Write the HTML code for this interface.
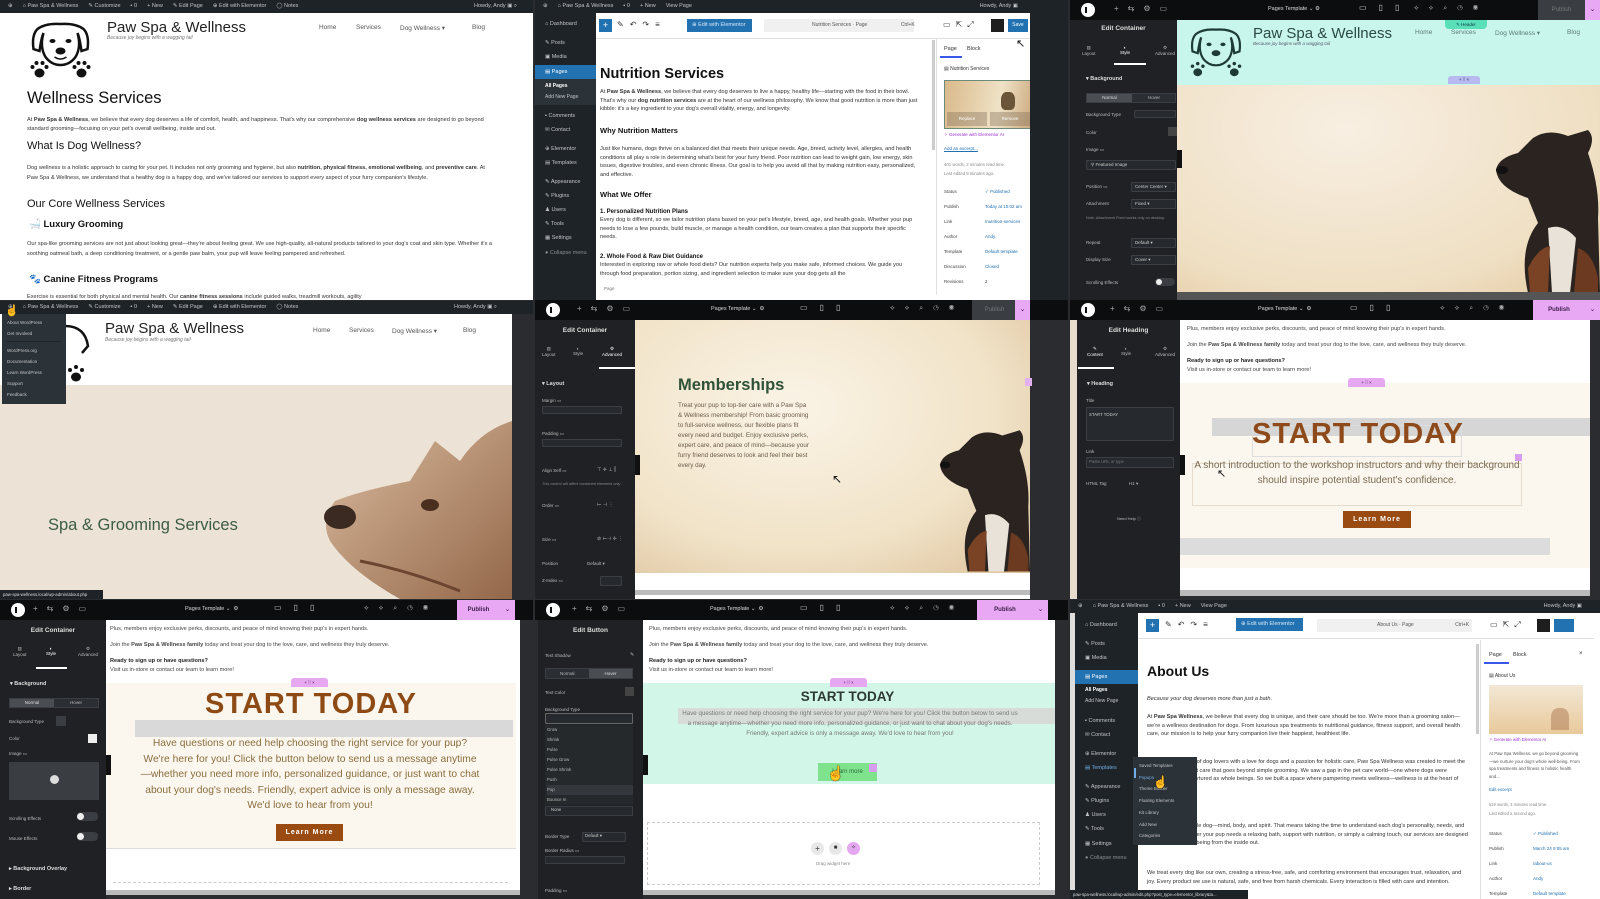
<!DOCTYPE html>
<html><head><meta charset="utf-8"><style>
*{box-sizing:border-box;margin:0;padding:0}
body{width:1600px;height:899px;overflow:hidden;background:#2a2c2f;font-family:"Liberation Sans",sans-serif;color:#333;position:relative}
.c{position:absolute;overflow:hidden;background:#fff}
.a{position:absolute;white-space:nowrap}
.adm{position:absolute;left:0;top:0;right:0;height:13px;background:#1d2327;color:#c3c4c7;font-size:5.5px;line-height:13px;padding-left:8px;white-space:nowrap}
.adm span{margin-right:10px}
.eb{position:absolute;left:0;top:0;right:0;height:20px;background:#0c0d0e}
.elogo{position:absolute;left:11px;top:3px;width:14px;height:14px;border-radius:50%;background:#fff}
.elogo:after{content:"";position:absolute;left:4px;top:4px;width:6px;height:6px;border-left:2px solid #0c0d0e}
.pub{position:absolute;top:0;height:20px;background:#3a3d42;color:#777;font-size:6px;line-height:20px;text-align:center}
.pubp{background:#e8a8f3;color:#3a1d48;font-weight:bold}
.chev{position:absolute;top:0;right:0;width:15px;height:20px;background:#e8a8f3;color:#4a2055;font-size:7px;line-height:20px;text-align:center}
.ep{position:absolute;left:0;top:20px;bottom:0;background:#1f2124;color:#ccc;font-size:5px}
.ep .a{color:#bbb}
.ph{position:absolute;left:0;right:0;top:6px;text-align:center;font-size:6.5px;font-weight:bold;color:#ddd}
.fld{position:absolute;height:8px;border:1px solid #3b3e43;border-radius:1px;background:#26292d}
.side{position:absolute;left:0;top:13px;bottom:0;background:#1d2327;color:#c3c4c7;font-size:5.5px}
.side div{position:absolute;left:10px;white-space:nowrap}
.bl{color:#333;font-size:5.6px;line-height:8.6px;position:absolute;white-space:normal}
.tl{font-size:5.6px;color:#555;position:absolute;white-space:nowrap}
</style></head><body>

<!-- ========== CELL A ========== -->
<div class="c" style="left:0;top:0;width:533px;height:300px">
 <div class="adm"><span>⊕</span><span>⌂ Paw Spa &amp; Wellness</span><span>✎ Customize</span><span>▪ 0</span><span>+ New</span><span>✎ Edit Page</span><span>⊕ Edit with Elementor</span><span>◯ Notes</span><span style="position:absolute;right:6px">Howdy, Andy ▣ ⌕</span></div>
 <svg class="a" style="left:27px;top:21px" width="67" height="62" viewBox="0 0 66 62"><path d="M10 8 Q18 2 33 3 Q48 2 56 8 Q62 14 60 28 L54 30 Q52 16 50 12 Q54 26 48 36 Q42 44 33 44 Q24 44 18 36 Q12 26 16 12 Q14 16 12 30 L6 28 Q4 14 10 8Z" fill="none" stroke="#111" stroke-width="2.5"/><ellipse cx="25" cy="20" rx="3" ry="2" fill="#111"/><ellipse cx="41" cy="20" rx="3" ry="2" fill="#111"/><ellipse cx="33" cy="30" rx="5" ry="3.5" fill="#111"/><path d="M27 36 Q33 40 39 36" stroke="#111" fill="none" stroke-width="1.5"/><g fill="#111"><ellipse cx="12" cy="52" rx="5" ry="4.5"/><circle cx="5" cy="46" r="2"/><circle cx="9" cy="42" r="2"/><circle cx="15" cy="42" r="2"/><circle cx="19" cy="46" r="2"/><ellipse cx="54" cy="52" rx="5" ry="4.5"/><circle cx="47" cy="46" r="2"/><circle cx="51" cy="42" r="2"/><circle cx="57" cy="42" r="2"/><circle cx="61" cy="46" r="2"/></g></svg>
 <div class="a" style="left:107px;top:19px;font-size:15px;color:#222">Paw Spa &amp; Wellness</div>
 <div class="a" style="left:107px;top:35px;font-size:5px;font-style:italic;color:#777">Because joy begins with a wagging tail</div>
 <div class="tl" style="left:319px;top:24px;font-size:6.5px">Home</div><div class="tl" style="left:356px;top:24px;font-size:6.5px">Services</div><div class="tl" style="left:400px;top:24px;font-size:6.5px">Dog Wellness ▾</div><div class="tl" style="left:472px;top:24px;font-size:6.5px">Blog</div>
 <div class="a" style="left:27px;top:89px;font-size:16.5px;color:#111">Wellness Services</div>
 <div class="bl" style="left:27px;top:116px;width:480px">At <b>Paw Spa &amp; Wellness</b>, we believe that every dog deserves a life of comfort, health, and happiness. That's why our comprehensive <b>dog wellness services</b> are designed to go beyond standard grooming—focusing on your pet's overall wellbeing, inside and out.</div>
 <div class="a" style="left:27px;top:140px;font-size:11px;color:#111">What Is Dog Wellness?</div>
 <div class="bl" style="left:27px;top:163px;width:470px;line-height:10px">Dog wellness is a holistic approach to caring for your pet. It includes not only grooming and hygiene, but also <b>nutrition, physical fitness, emotional wellbeing</b>, and <b>preventive care</b>. At Paw Spa &amp; Wellness, we understand that a healthy dog is a happy dog, and we've tailored our services to support every aspect of your furry companion's lifestyle.</div>
 <div class="a" style="left:27px;top:198px;font-size:11px;color:#111">Our Core Wellness Services</div>
 <div class="a" style="left:29px;top:219px;font-size:9.5px;font-weight:bold;color:#111">🛁 Luxury Grooming</div>
 <div class="bl" style="left:27px;top:239px;width:470px;line-height:10px">Our spa-like grooming services are not just about looking great—they're about feeling great. We use high-quality, all-natural products tailored to your dog's coat and skin type. Whether it's a soothing oatmeal bath, a deep conditioning treatment, or a gentle paw balm, your pup will leave feeling pampered and refreshed.</div>
 <div class="a" style="left:29px;top:274px;font-size:9.5px;font-weight:bold;color:#111">🐾 Canine Fitness Programs</div>
 <div class="bl" style="left:27px;top:293px;width:470px">Exercise is essential for both physical and mental health. Our <b>canine fitness sessions</b> include guided walks, treadmill workouts, agility</div>
</div>

<!-- ========== CELL B ========== -->
<div class="c" style="left:535px;top:0;width:533px;height:300px">
 <div class="adm"><span>⊕</span><span>⌂ Paw Spa &amp; Wellness</span><span>▪ 0</span><span>+ New</span><span>View Page</span><span style="position:absolute;right:40px">Howdy, Andy ▣</span></div>
 <div class="side" style="width:61px">
  <div style="top:8px">⌂ Dashboard</div><div style="top:27px">✎ Posts</div><div style="top:41px">▣ Media</div>
  <div style="left:0;top:52px;width:61px;height:14px;background:#2271b1;color:#fff;padding-left:10px;line-height:14px">▤ Pages</div>
  <div style="left:0;top:66px;width:61px;height:26px;background:#2c3338"></div>
  <div style="top:70px;color:#fff;font-weight:bold;font-size:5px">All Pages</div><div style="top:81px;font-size:5px">Add New Page</div>
  <div style="top:100px">▪ Comments</div><div style="top:114px">✉ Contact</div><div style="top:133px">⊕ Elementor</div><div style="top:147px">▤ Templates</div><div style="top:166px">✎ Appearance</div><div style="top:180px">✎ Plugins</div><div style="top:194px">♟ Users</div><div style="top:208px">✎ Tools</div><div style="top:222px">▦ Settings</div><div style="top:237px;color:#8c8f94">● Collapse menu</div>
 </div>
 <div class="a" style="left:61px;top:13px;width:436px;height:26px;border-bottom:1px solid #e0e0e0;background:#fff"></div>
 <div class="a" style="left:64px;top:19px;width:13px;height:13px;background:#2271b1;color:#fff;font-size:9px;text-align:center;line-height:13px">+</div>
 <div class="a" style="left:82px;top:20px;font-size:8px;color:#333;letter-spacing:6px">✎↶↷≡</div>
 <div class="a" style="left:152px;top:19px;width:65px;height:13px;background:#2271b1;color:#dbe9f5;font-size:5.5px;line-height:13px;padding-left:5px">⊕ Edit with Elementor</div>
 <div class="a" style="left:229px;top:19px;width:150px;height:13px;background:#f0f0f0;font-size:5px;line-height:13px;color:#555;padding-left:48px">Nutrition Services · Page <span style="margin-left:32px">Ctrl+K</span></div>
 <div class="a" style="left:408px;top:20px;font-size:8px;color:#333;letter-spacing:5px">▭⇱⤢</div>
 <div class="a" style="left:456px;top:19px;width:13px;height:13px;background:#1e1e1e"></div>
 <div class="a" style="left:473px;top:19px;width:20px;height:13px;background:#2271b1;color:#fff;font-size:5px;line-height:13px;text-align:center">Save</div>
 <div class="a" style="left:61px;top:39px;width:336px;height:256px;background:#fff;white-space:normal">
  <div class="a" style="left:4px;top:27px;font-size:14.5px;font-weight:bold;color:#111">Nutrition Services</div>
  <div class="bl" style="left:4px;top:49px;width:322px">At <b>Paw Spa &amp; Wellness</b>, we believe that every dog deserves to live a happy, healthy life—starting with the food in their bowl. That's why our <b>dog nutrition services</b> are at the heart of our wellness philosophy. We know that good nutrition is more than just kibble: it's a key ingredient to your dog's overall vitality, energy, and longevity.</div>
  <div class="a" style="left:4px;top:87px;font-size:7.5px;font-weight:bold;color:#111">Why Nutrition Matters</div>
  <div class="bl" style="left:4px;top:106px;width:322px">Just like humans, dogs thrive on a balanced diet that meets their unique needs. Age, breed, activity level, allergies, and health conditions all play a role in determining what's best for your furry friend. Poor nutrition can lead to weight gain, low energy, skin issues, digestive troubles, and even chronic illness. Our goal is to help you avoid all that by making nutrition easy, personalized, and effective.</div>
  <div class="a" style="left:4px;top:151px;font-size:7.5px;font-weight:bold;color:#111">What We Offer</div>
  <div class="a" style="left:4px;top:170px;font-size:6px;font-weight:bold;color:#111">1. Personalized Nutrition Plans</div>
  <div class="bl" style="left:4px;top:177px;width:322px">Every dog is different, so we tailor nutrition plans based on your pet's lifestyle, breed, age, and health goals. Whether your pup needs to lose a few pounds, build muscle, or manage a health condition, our team creates a plan that supports their specific needs.</div>
  <div class="a" style="left:4px;top:215px;font-size:6px;font-weight:bold;color:#111">2. Whole Food &amp; Raw Diet Guidance</div>
  <div class="bl" style="left:4px;top:222px;width:322px">Interested in exploring raw or whole food diets? Our nutrition experts help you make safe, informed choices. We guide you through food preparation, portion sizing, and ingredient selection to make sure your dog gets all the</div>
  <div class="a" style="left:8px;top:247px;font-size:4.5px;color:#777">Page</div>
 </div>
 <div class="a" style="left:397px;top:40px;width:3px;height:110px;background:#ccc"></div>
 <div class="a" style="left:401px;top:39px;width:96px;height:256px;background:#fff;border-left:1px solid #e0e0e0">
  <div class="a" style="left:7px;top:7px;font-size:5.5px;color:#333">Page</div><div class="a" style="left:30px;top:7px;font-size:5.5px;color:#333">Block</div>
  <div class="a" style="left:3px;top:17px;width:22px;height:1.5px;background:#3858e9"></div>
  <div class="a" style="left:7px;top:27px;font-size:5px;color:#333">▤ Nutrition Services</div>
  <div class="a" style="left:7px;top:41px;width:91px;height:49px;background:linear-gradient(100deg,#d9b98a,#efe2c6 60%,#c9a57a);border:1px solid #6a8a7a"></div>
  <div class="a" style="left:64px;top:53px;width:14px;height:18px;background:#6b5538;border-radius:40% 40% 30% 30%"></div>
  <div class="a" style="left:10px;top:73px;width:40px;height:14px;background:rgba(120,100,80,.35);color:#fff;font-size:4.5px;text-align:center;line-height:14px">Replace</div>
  <div class="a" style="left:53px;top:73px;width:40px;height:14px;background:rgba(120,100,80,.35);color:#fff;font-size:4.5px;text-align:center;line-height:14px">Remove</div>
  <div class="a" style="left:7px;top:93px;font-size:4.5px;color:#9b30d0">✧ Generate with Elementor AI</div>
  <div class="a" style="left:7px;top:107px;font-size:4.5px;color:#2271b1;text-decoration:underline">Add an excerpt...</div>
  <div class="a" style="left:7px;top:121px;font-size:4.3px;color:#888;line-height:9px">401 words, 2 minutes read time.<br>Last edited 9 minutes ago.</div>
  <div class="a" style="left:7px;top:145px;font-size:4.5px;color:#444;line-height:15px">Status<br>Publish<br>Link<br>Author<br>Template<br>Discussion<br>Revisions</div>
  <div class="a" style="left:48px;top:145px;font-size:4.5px;color:#2271b1;line-height:15px">✓ Published<br>Today at 10:02 am<br>/nutrition-services<br>Andy<br>Default template<br>Closed<br><span style="color:#444">2</span></div>
 </div>
 <div class="a" style="left:495px;top:13px;width:38px;height:287px;background:#1d2327"></div>
 <div class="a" style="left:481px;top:37px;font-size:11px;color:#111">↖</div>
</div>

<!-- ========== CELL C ========== -->
<div class="c" style="left:1070px;top:0;width:530px;height:300px;background:#f2e5cf">
 <div class="a" style="left:107px;top:20px;width:423px;height:272px;background:radial-gradient(ellipse at 40% 40%,#f8efe2,#efdfc3 70%,#e4c9a0)"></div>
 <div class="a" style="left:107px;top:20px;width:423px;height:65px;background:#c9f6ec"></div>
 <svg class="a" style="left:117px;top:27px" width="58" height="54" viewBox="0 0 66 62"><path d="M10 8 Q18 2 33 3 Q48 2 56 8 Q62 14 60 28 L54 30 Q52 16 50 12 Q54 26 48 36 Q42 44 33 44 Q24 44 18 36 Q12 26 16 12 Q14 16 12 30 L6 28 Q4 14 10 8Z" fill="none" stroke="#1d3b34" stroke-width="2.5"/><ellipse cx="33" cy="30" rx="5" ry="3.5" fill="#1d3b34"/><ellipse cx="25" cy="20" rx="3" ry="2" fill="#1d3b34"/><ellipse cx="41" cy="20" rx="3" ry="2" fill="#1d3b34"/><g fill="#1d3b34"><ellipse cx="12" cy="52" rx="5" ry="4.5"/><circle cx="6" cy="45" r="2"/><circle cx="12" cy="42" r="2"/><circle cx="18" cy="45" r="2"/><ellipse cx="54" cy="52" rx="5" ry="4.5"/><circle cx="48" cy="45" r="2"/><circle cx="54" cy="42" r="2"/><circle cx="60" cy="45" r="2"/></g></svg>
 <div class="a" style="left:183px;top:25px;font-size:15px;color:#2a4a44">Paw Spa &amp; Wellness</div>
 <div class="a" style="left:183px;top:41px;font-size:4.5px;color:#556;font-style:italic">Because joy begins with a wagging tail</div>
 <div class="tl" style="left:345px;top:29px;font-size:6.5px;color:#5a7a74">Home</div><div class="tl" style="left:381px;top:29px;font-size:6.5px;color:#5a7a74">Services</div><div class="tl" style="left:425px;top:29px;font-size:6.5px;color:#5a7a74">Dog Wellness ▾</div><div class="tl" style="left:497px;top:29px;font-size:6.5px;color:#5a7a74">Blog</div>
 <div class="a" style="left:375px;top:20px;width:42px;height:9px;background:#5ae0b8;border-radius:0 0 4px 4px;font-size:4.5px;color:#134;text-align:center;line-height:9px">✎ Header</div>
 <div class="a" style="left:378px;top:76px;width:32px;height:8px;background:#b8b9f0;border-radius:3px 3px 0 0;font-size:4.5px;text-align:center;line-height:8px;color:#335">+ ⁞⁞ ×</div>
 <svg class="a" style="left:418px;top:128px" width="112" height="165" viewBox="0 0 112 165"><path d="M40 165 Q30 120 50 95 L40 70 Q10 60 8 42 Q10 30 30 25 L45 10 Q60 0 80 8 L100 2 Q108 10 100 25 Q112 60 110 90 L112 165Z" fill="#2a2320"/><path d="M60 100 Q75 95 88 110 L82 165 L64 165Z" fill="#e8e2d8"/><path d="M40 140 Q50 120 62 118 L60 165 L42 165Z" fill="#7a4326"/><path d="M90 120 Q105 125 110 150 L110 165 L86 165Z" fill="#6b3a20"/><ellipse cx="14" cy="42" rx="6" ry="4" fill="#111"/></svg>
 <div class="eb"><div class="elogo"></div><div class="a" style="left:44px;top:4px;color:#aaa;font-size:8px;letter-spacing:9px">+⇆⚙▭</div><div class="a" style="left:198px;top:6px;color:#ddd;font-size:5.5px">Pages Template ⌄ ⚙</div><div class="a" style="left:289px;top:3px;color:#ccc;font-size:8px;letter-spacing:12px">▭▯▯</div><div class="a" style="left:344px;top:5px;color:#aaa;font-size:7px;letter-spacing:10px">⟡⟡⌕◷◉</div><div class="pub" style="left:468px;width:47px">Publish</div><div class="chev">⌄</div></div>
 <div class="ep" style="width:107px">
  <div class="ph" style="top:5px">Edit Container</div>
  <div class="a" style="left:12px;top:25px;font-size:4.5px;text-align:center">▥<br>Layout</div><div class="a" style="left:50px;top:25px;font-size:4.5px;text-align:center;color:#fff">◐<br>Style</div><div class="a" style="left:85px;top:25px;font-size:4.5px;text-align:center">⚙<br>Advanced</div>
  <div class="a" style="left:44px;top:43px;width:32px;height:1.5px;background:#fff"></div>
  <div class="a" style="left:16px;top:56px;font-size:5.5px;font-weight:bold;color:#ddd">▾ Background</div>
  <div class="a" style="left:16px;top:73px;width:90px;height:10px;background:#2b2e33;border:1px solid #3a3d42"></div><div class="a" style="left:17px;top:74px;width:45px;height:8px;background:#4a4d52;font-size:4.5px;text-align:center;line-height:8px;color:#ddd">Normal</div><div class="a" style="left:78px;top:75px;font-size:4.5px">Hover</div>
  <div class="a" style="left:16px;top:92px;font-size:4.5px">Background Type</div><div class="fld" style="left:64px;top:90px;width:42px"></div>
  <div class="a" style="left:16px;top:110px;font-size:4.5px">Color</div><div class="a" style="left:98px;top:107px;width:9px;height:9px;background:#444"></div>
  <div class="a" style="left:16px;top:127px;font-size:4.5px">Image ▭</div>
  <div class="fld" style="left:16px;top:140px;width:90px;height:10px;font-size:4.5px;line-height:8px;padding-left:4px;color:#ccc">⚲ Featured Image</div>
  <div class="a" style="left:16px;top:164px;font-size:4.5px">Position ▭</div><div class="fld" style="left:61px;top:162px;width:45px;height:10px;font-size:4.5px;line-height:8px;padding-left:3px">Center Center ▾</div>
  <div class="a" style="left:16px;top:181px;font-size:4.5px">Attachment</div><div class="fld" style="left:61px;top:179px;width:45px;height:10px;font-size:4.5px;line-height:8px;padding-left:3px">Fixed ▾</div>
  <div class="a" style="left:16px;top:196px;font-size:3.8px;color:#888;white-space:normal;width:85px">Note: Attachment Fixed works only on desktop.</div>
  <div class="a" style="left:16px;top:220px;font-size:4.5px">Repeat</div><div class="fld" style="left:61px;top:218px;width:45px;height:10px;font-size:4.5px;line-height:8px;padding-left:3px">Default ▾</div>
  <div class="a" style="left:16px;top:237px;font-size:4.5px">Display Size</div><div class="fld" style="left:61px;top:235px;width:45px;height:10px;font-size:4.5px;line-height:8px;padding-left:3px">Cover ▾</div>
  <div class="a" style="left:16px;top:260px;font-size:4.5px">Scrolling Effects</div><div class="a" style="left:85px;top:258px;width:20px;height:8px;border-radius:4px;background:#3a3d42"></div><div class="a" style="left:86px;top:259px;width:6px;height:6px;border-radius:50%;background:#eee"></div>
 </div>
 <div class="a" style="left:107px;top:150px;width:5px;height:18px;background:#111"></div>
 <div class="a" style="left:107px;top:292px;width:423px;height:8px;background:#555"></div>
</div>

<!-- ========== CELL D ========== -->
<div class="c" style="left:0;top:301px;width:533px;height:298px">
 <div class="a" style="left:0;top:0;width:533px;height:385px;background:#fff"></div>
 <div class="a" style="left:0;top:84px;width:512px;height:214px;background:#ece2d6"></div>
 <svg class="a" style="left:320px;top:120px" width="192" height="178" viewBox="0 0 192 178"><defs><linearGradient id="fg" x1="0" y1="0" x2="1" y2="1"><stop offset="0" stop-color="#d9b89a"/><stop offset="1" stop-color="#8a5a3a"/></linearGradient></defs><path d="M192 0 L192 178 L80 178 Q30 150 10 120 Q0 100 15 80 Q40 70 90 60 L115 20 L140 40 Q160 10 192 0Z" fill="url(#fg)" opacity=".9"/><ellipse cx="20" cy="96" rx="16" ry="12" fill="#3a2a22"/><ellipse cx="110" cy="84" rx="9" ry="6" fill="#4a2e1e"/><path d="M40 140 Q90 150 140 170" stroke="#6b4530" stroke-width="3" fill="none"/></svg>
 <div class="a" style="left:48px;top:215px;font-size:16.5px;color:#3d5c44">Spa &amp; Grooming Services</div>
 <svg class="a" style="left:60px;top:20px" width="32" height="68" viewBox="0 0 32 68"><path d="M5 5 Q25 5 28 25 L22 32" fill="none" stroke="#111" stroke-width="2.5"/><g fill="#111"><ellipse cx="16" cy="56" rx="5" ry="4.5"/><circle cx="10" cy="49" r="2"/><circle cx="16" cy="46" r="2"/><circle cx="22" cy="49" r="2"/></g></svg>
 <div class="a" style="left:105px;top:19px;font-size:15px;color:#222">Paw Spa &amp; Wellness</div>
 <div class="a" style="left:105px;top:36px;font-size:5px;font-style:italic;color:#777">Because joy begins with a wagging tail</div>
 <div class="tl" style="left:313px;top:26px;font-size:6.5px">Home</div><div class="tl" style="left:349px;top:26px;font-size:6.5px">Services</div><div class="tl" style="left:392px;top:26px;font-size:6.5px">Dog Wellness ▾</div><div class="tl" style="left:463px;top:26px;font-size:6.5px">Blog</div>
 <div class="adm"><span>⊕</span><span>⌂ Paw Spa &amp; Wellness</span><span>✎ Customize</span><span>▪ 0</span><span>+ New</span><span>✎ Edit Page</span><span>⊕ Edit with Elementor</span><span>◯ Notes</span><span style="position:absolute;right:26px">Howdy, Andy ▣ ⌕</span></div>
 <div class="a" style="left:2px;top:13px;width:64px;height:90px;background:#2c3338;font-size:4.5px;color:#c3c4c7;line-height:11px;padding:3px 5px">About WordPress<br>Get Involved<div style="height:4px;border-top:1px solid #1d2327;margin-top:2px"></div>WordPress.org<br>Documentation<br>Learn WordPress<br>Support<br>Feedback</div>
 <div class="a" style="left:5px;top:3px;font-size:11px;color:#fff">☝</div>
 <div class="a" style="left:512px;top:13px;width:21px;height:285px;background:#2a2c2f"></div>
 <div class="a" style="left:0;top:289px;width:103px;height:9px;background:#1d2327;color:#ddd;font-size:4.3px;line-height:9px;padding-left:3px">paw-spa-wellness.local/wp-admin/about.php</div>
</div>

<!-- ========== CELL E ========== -->
<div class="c" style="left:535px;top:300px;width:533px;height:299px;background:#2a2c2f">
 <div class="a" style="left:100px;top:20px;width:395px;height:253px;background:radial-gradient(ellipse at 40% 35%,#faf3e6,#f1e3c8 60%,#dcc09a)"></div>
 <div class="a" style="left:100px;top:273px;width:395px;height:26px;background:#fff"></div>
 <div class="a" style="left:100px;top:290px;width:395px;height:5px;background:#bbb"></div>
 <div class="a" style="left:143px;top:76px;font-size:16.5px;font-weight:bold;color:#2f5238">Memberships</div>
 <div class="a" style="left:143px;top:101px;width:132px;font-size:6.3px;line-height:10px;color:#6a5a48;white-space:normal">Treat your pup to top-tier care with a Paw Spa &amp; Wellness membership! From basic grooming to full-service wellness, our flexible plans fit every need and budget. Enjoy exclusive perks, expert care, and peace of mind—because your furry friend deserves to look and feel their best every day.</div>
 <div class="a" style="left:490px;top:78px;width:7px;height:8px;background:#e3b0f0"></div>
 <svg class="a" style="left:398px;top:127px" width="97" height="146" viewBox="0 0 112 165"><path d="M40 165 Q30 120 50 95 L40 70 Q10 60 8 42 Q10 30 30 25 L45 10 Q60 0 80 8 L100 2 Q108 10 100 25 Q112 60 110 90 L112 165Z" fill="#2a2320"/><path d="M60 100 Q75 95 88 110 L82 165 L64 165Z" fill="#e8e2d8"/><path d="M40 140 Q50 120 62 118 L60 165 L42 165Z" fill="#7a4326"/><path d="M90 120 Q105 125 110 150 L110 165 L86 165Z" fill="#6b3a20"/><ellipse cx="14" cy="42" rx="6" ry="4" fill="#111"/></svg>
 <div class="a" style="left:297px;top:172px;font-size:12px;color:#111">↖</div>
 <div class="eb"><div class="elogo"></div><div class="a" style="left:42px;top:4px;color:#aaa;font-size:8px;letter-spacing:9px">+⇆⚙▭</div><div class="a" style="left:176px;top:6px;color:#ddd;font-size:5.5px">Pages Template ⌄ &nbsp;⚙</div><div class="a" style="left:265px;top:3px;color:#ccc;font-size:8px;letter-spacing:12px">▭▯▯</div><div class="a" style="left:355px;top:5px;color:#aaa;font-size:7px;letter-spacing:10px">⟡⟡⌕◷◉</div><div class="pub" style="left:437px;width:45px">Publish</div><div class="chev" style="right:38px">⌄</div></div>
 <div class="ep" style="width:100px">
  <div class="ph" style="top:7px">Edit Container</div>
  <div class="a" style="left:7px;top:26px;font-size:4.5px;text-align:center">▥<br>Layout</div><div class="a" style="left:38px;top:26px;font-size:4.5px;text-align:center">◐<br>Style</div><div class="a" style="left:67px;top:26px;font-size:4.5px;text-align:center;color:#fff">⚙<br>Advanced</div>
  <div class="a" style="left:64px;top:47px;width:36px;height:1.5px;background:#fff"></div>
  <div class="a" style="left:7px;top:61px;font-size:5.5px;font-weight:bold;color:#ddd">▾ Layout</div>
  <div class="a" style="left:7px;top:78px;font-size:4.5px">Margin ▭</div><div class="fld" style="left:7px;top:86px;width:80px"></div>
  <div class="a" style="left:7px;top:111px;font-size:4.5px">Padding ▭</div><div class="fld" style="left:7px;top:119px;width:80px"></div>
  <div class="a" style="left:7px;top:148px;font-size:4.5px">Align Self ▭</div><div class="a" style="left:62px;top:147px;font-size:5px">⊤ ✛ ⊥ ⫿</div>
  <div class="a" style="left:7px;top:162px;font-size:3.8px;color:#888;font-style:italic">This control will affect contained elements only.</div>
  <div class="a" style="left:7px;top:183px;font-size:4.5px">Order ▭</div><div class="a" style="left:62px;top:182px;font-size:5px">⊢ ⊣ ⋮</div>
  <div class="a" style="left:7px;top:217px;font-size:4.5px">Size ▭</div><div class="a" style="left:62px;top:216px;font-size:5px">⊘ ⊢⊣ ✛ ⋮</div>
  <div class="a" style="left:7px;top:241px;font-size:4.5px">Position</div><div class="a" style="left:52px;top:241px;font-size:4.5px">Default ▾</div>
  <div class="a" style="left:7px;top:258px;font-size:4.5px">Z-Index ▭</div><div class="fld" style="left:65px;top:256px;width:22px;height:10px"></div>
 </div>
 <div class="a" style="left:100px;top:155px;width:5px;height:20px;background:#111"></div>
</div>

<!-- ========== CELL F ========== -->
<div class="c" style="left:1070px;top:300px;width:530px;height:299px;background:#2a2c2f">
 <div class="a" style="left:103px;top:20px;width:417px;height:270px;background:#fff"></div>
 <div class="bl" style="left:117px;top:25px;font-size:5.6px;color:#444;white-space:nowrap">Plus, members enjoy exclusive perks, discounts, and peace of mind knowing their pup's in expert hands.</div>
 <div class="bl" style="left:117px;top:41px;font-size:5.6px;color:#444;white-space:nowrap">Join the <b>Paw Spa &amp; Wellness family</b> today and treat your dog to the love, care, and wellness they truly deserve.</div>
 <div class="bl" style="left:117px;top:57px;font-size:5.6px;color:#222;font-weight:bold;white-space:nowrap">Ready to sign up or have questions?</div>
 <div class="bl" style="left:117px;top:66px;font-size:5.6px;color:#444;white-space:nowrap">Visit us in-store or contact our team to learn more!</div>
 <div class="a" style="left:103px;top:83px;width:417px;height:185px;background:#fbf7ee"></div>
 <div class="a" style="left:278px;top:78px;width:37px;height:9px;background:#e6a8f0;border-radius:3px 3px 0 0;font-size:4.5px;text-align:center;line-height:9px;color:#4a2055">+ ⁞⁞ ×</div>
 <div class="a" style="left:142px;top:118px;width:378px;height:18px;background:#d6d6d6"></div>
 <div class="a" style="left:182px;top:125px;width:210px;height:32px;border:1px solid #ddd"></div>
 <div class="a" style="left:182px;top:118px;width:210px;text-align:center;font-size:29px;font-weight:bold;color:#8e4a1a;letter-spacing:1px">START TODAY</div>
 <div class="a" style="left:222px;top:118px;width:130px;height:5px;background:#d6d6d6"></div>
 <div class="a" style="left:122px;top:163px;width:330px;height:43px;border:1px solid #e6dccc"></div>
 <div class="a" style="left:120px;top:158px;width:334px;text-align:center;font-size:10px;line-height:15px;color:#7a6a52;white-space:normal">A short introduction to the workshop instructors and why their background should inspire potential student's confidence.</div>
 <div class="a" style="left:445px;top:154px;width:7px;height:7px;background:#d89cf0"></div>
 <div class="a" style="left:147px;top:167px;font-size:11px;color:#111">↖</div>
 <div class="a" style="left:273px;top:211px;width:68px;height:17px;background:#9a4b12;color:#fff;font-size:7px;font-weight:bold;text-align:center;line-height:17px;letter-spacing:1px">Learn More</div>
 <div class="a" style="left:103px;top:238px;width:377px;height:17px;background:#dcdcdc"></div>
 <div class="a" style="left:103px;top:290px;width:417px;height:6px;background:#bbb"></div>
 <div class="eb"><div class="elogo"></div><div class="a" style="left:40px;top:4px;color:#aaa;font-size:8px;letter-spacing:9px">+⇆⚙▭</div><div class="a" style="left:188px;top:6px;color:#ddd;font-size:5.5px">Pages Template ⌄ &nbsp;⚙</div><div class="a" style="left:280px;top:3px;color:#ccc;font-size:8px;letter-spacing:12px">▭▯▯</div><div class="a" style="left:370px;top:5px;color:#aaa;font-size:7px;letter-spacing:10px">⟡⟡⌕◷◉</div><div class="pub pubp" style="left:463px;width:52px">Publish</div><div class="chev">⌄</div></div>
 <div class="ep" style="width:103px;left:7px">
  <div class="ph" style="top:7px">Edit Heading</div>
  <div class="a" style="left:10px;top:26px;font-size:4.5px;text-align:center;color:#fff">✎<br>Content</div><div class="a" style="left:44px;top:26px;font-size:4.5px;text-align:center">◐<br>Style</div><div class="a" style="left:78px;top:26px;font-size:4.5px;text-align:center">⚙<br>Advanced</div>
  <div class="a" style="left:1px;top:47px;width:36px;height:1.5px;background:#fff"></div>
  <div class="a" style="left:10px;top:61px;font-size:5.5px;font-weight:bold;color:#ddd">▾ Heading</div>
  <div class="a" style="left:9px;top:78px;font-size:4.5px">Title</div>
  <div class="fld" style="left:9px;top:87px;width:88px;height:34px;font-size:4.3px;padding:4px 2px;color:#ccc">START TODAY</div>
  <div class="a" style="left:9px;top:129px;font-size:4.5px">Link</div>
  <div class="fld" style="left:9px;top:137px;width:88px;height:11px;font-size:4.3px;padding:1px 2px;color:#777">Paste URL or type</div>
  <div class="a" style="left:9px;top:161px;font-size:4.5px">HTML Tag</div><div class="a" style="left:52px;top:161px;font-size:4.5px">H1 ▾</div>
  <div class="a" style="left:40px;top:196px;font-size:4px">Need Help ⓘ</div>
 </div>
 <div class="a" style="left:0;top:20px;width:7px;height:279px;background:#e8dccf"></div>
 <div class="a" style="left:110px;top:155px;width:5px;height:20px;background:#111"></div>
</div>

<!-- ========== CELL G ========== -->
<div class="c" style="left:0;top:600px;width:533px;height:299px;background:#2a2c2f">
 <div class="a" style="left:106px;top:20px;width:414px;height:270px;background:#fff"></div>
 <div class="bl" style="left:110px;top:25px;font-size:5.6px;color:#444;white-space:nowrap">Plus, members enjoy exclusive perks, discounts, and peace of mind knowing their pup's in expert hands.</div>
 <div class="bl" style="left:110px;top:41px;font-size:5.6px;color:#444;white-space:nowrap">Join the <b>Paw Spa &amp; Wellness family</b> today and treat your dog to the love, care, and wellness they truly deserve.</div>
 <div class="bl" style="left:110px;top:57px;font-size:5.6px;color:#222;font-weight:bold;white-space:nowrap">Ready to sign up or have questions?</div>
 <div class="bl" style="left:110px;top:66px;font-size:5.6px;color:#444;white-space:nowrap">Visit us in-store or contact our team to learn more!</div>
 <div class="a" style="left:106px;top:83px;width:410px;height:166px;background:#fbf7ee;border-bottom:1px solid #ddd"></div>
 <div class="a" style="left:291px;top:78px;width:37px;height:9px;background:#e6a8f0;border-radius:3px 3px 0 0;font-size:4.5px;text-align:center;line-height:9px;color:#4a2055">+ ⁞⁞ ×</div>
 <div class="a" style="left:106px;top:88px;width:410px;text-align:center;font-size:29px;font-weight:bold;color:#8e4a14;letter-spacing:1px">START TODAY</div>
 <div class="a" style="left:135px;top:120px;width:378px;height:17px;background:#d9d9d9"></div>
 <div class="a" style="left:140px;top:136px;width:340px;text-align:center;font-size:10.3px;line-height:15.6px;color:#8a6d3e;white-space:normal">Have questions or need help choosing the right service for your pup? We're here for you! Click the button below to send us a message anytime—whether you need more info, personalized guidance, or just want to chat about your dog's needs. Friendly, expert advice is only a message away. We'd love to hear from you!</div>
 <div class="a" style="left:276px;top:224px;width:67px;height:17px;background:#9a4b12;color:#fff;font-size:7px;font-weight:bold;text-align:center;line-height:17px;letter-spacing:1px">Learn More</div>
 <div class="a" style="left:113px;top:282px;width:395px;border-top:1px dashed #ccc"></div>
 <div class="a" style="left:106px;top:290px;width:414px;height:5px;background:#bbb"></div>
 <div class="eb"><div class="elogo"></div><div class="a" style="left:33px;top:4px;color:#aaa;font-size:8px;letter-spacing:9px">+⇆⚙▭</div><div class="a" style="left:185px;top:6px;color:#ddd;font-size:5.5px">Pages Template ⌄ &nbsp;⚙</div><div class="a" style="left:274px;top:3px;color:#ccc;font-size:8px;letter-spacing:12px">▭▯▯</div><div class="a" style="left:364px;top:5px;color:#aaa;font-size:7px;letter-spacing:10px">⟡⟡⌕◷◉</div><div class="pub pubp" style="left:457px;width:43px">Publish</div><div class="chev" style="right:18px">⌄</div></div>
 <div class="ep" style="width:106px">
  <div class="ph" style="top:7px">Edit Container</div>
  <div class="a" style="left:13px;top:26px;font-size:4.5px;text-align:center">▥<br>Layout</div><div class="a" style="left:46px;top:26px;font-size:4.5px;text-align:center;color:#fff">◐<br>Style</div><div class="a" style="left:78px;top:26px;font-size:4.5px;text-align:center">⚙<br>Advanced</div>
  <div class="a" style="left:36px;top:47px;width:31px;height:1.5px;background:#fff"></div>
  <div class="a" style="left:10px;top:61px;font-size:5.5px;font-weight:bold;color:#ddd">▾ Background</div>
  <div class="a" style="left:9px;top:78px;width:90px;height:10px;background:#2b2e33;border:1px solid #3a3d42"></div><div class="a" style="left:10px;top:79px;width:44px;height:8px;background:#4a4d52;font-size:4.5px;text-align:center;line-height:8px;color:#ddd">Normal</div><div class="a" style="left:70px;top:80px;font-size:4.5px">Hover</div>
  <div class="a" style="left:9px;top:99px;font-size:4.5px">Background Type</div><div class="a" style="left:56px;top:96px;width:10px;height:10px;background:#3a3d42"></div>
  <div class="a" style="left:9px;top:116px;font-size:4.5px">Color</div><div class="a" style="left:88px;top:114px;width:9px;height:9px;background:#eee"></div>
  <div class="a" style="left:9px;top:131px;font-size:4.5px">Image ▭</div>
  <div class="a" style="left:9px;top:142px;width:90px;height:38px;background:#3a3d42"></div><div class="a" style="left:50px;top:155px;width:9px;height:9px;border-radius:50%;background:#ddd"></div>
  <div class="a" style="left:9px;top:196px;font-size:4.5px">Scrolling Effects</div><div class="a" style="left:77px;top:192px;width:21px;height:9px;border-radius:4px;background:#3a3d42"></div><div class="a" style="left:77px;top:193px;width:7px;height:7px;border-radius:50%;background:#eee"></div>
  <div class="a" style="left:9px;top:216px;font-size:4.5px">Mouse Effects</div><div class="a" style="left:77px;top:212px;width:21px;height:9px;border-radius:4px;background:#3a3d42"></div><div class="a" style="left:77px;top:213px;width:7px;height:7px;border-radius:50%;background:#eee"></div>
  <div class="a" style="left:9px;top:246px;font-size:5.5px;font-weight:bold;color:#ddd">▸ Background Overlay</div>
  <div class="a" style="left:9px;top:266px;font-size:5.5px;font-weight:bold;color:#ddd">▸ Border</div>
 </div>
 <div class="a" style="left:106px;top:155px;width:5px;height:20px;background:#111"></div>
</div>

<!-- ========== CELL H ========== -->
<div class="c" style="left:535px;top:600px;width:533px;height:299px;background:#2a2c2f">
 <div class="a" style="left:105px;top:20px;width:415px;height:270px;background:#fff"></div>
 <div class="bl" style="left:114px;top:25px;font-size:5.6px;color:#444;white-space:nowrap">Plus, members enjoy exclusive perks, discounts, and peace of mind knowing their pup's in expert hands.</div>
 <div class="bl" style="left:114px;top:41px;font-size:5.6px;color:#444;white-space:nowrap">Join the <b>Paw Spa &amp; Wellness family</b> today and treat your dog to the love, care, and wellness they truly deserve.</div>
 <div class="bl" style="left:114px;top:57px;font-size:5.6px;color:#222;font-weight:bold;white-space:nowrap">Ready to sign up or have questions?</div>
 <div class="bl" style="left:114px;top:66px;font-size:5.6px;color:#444;white-space:nowrap">Visit us in-store or contact our team to learn more!</div>
 <div class="a" style="left:105px;top:83px;width:415px;height:101px;background:#d2f6e8"></div>
 <div class="a" style="left:295px;top:78px;width:37px;height:9px;background:#e6a8f0;border-radius:3px 3px 0 0;font-size:4.5px;text-align:center;line-height:9px;color:#4a2055">+ ⁞⁞ ×</div>
 <div class="a" style="left:105px;top:89px;width:415px;text-align:center;font-size:13.5px;font-weight:bold;color:#2d3a33">START TODAY</div>
 <div class="a" style="left:143px;top:108px;width:377px;height:16px;background:#d8dcd9"></div>
 <div class="a" style="left:145px;top:109px;width:340px;text-align:center;font-size:6.2px;line-height:10px;color:#777;white-space:normal">Have questions or need help choosing the right service for your pup? We're here for you! Click the button below to send us a message anytime—whether you need more info, personalized guidance, or just want to chat about your dog's needs. Friendly, expert advice is only a message away. We'd love to hear from you!</div>
 <div class="a" style="left:283px;top:163px;width:59px;height:18px;background:#7fe28d;color:#2a6a3a;font-size:6px;text-align:center;line-height:18px">Learn more</div>
 <div class="a" style="left:334px;top:164px;width:8px;height:8px;background:#d89cf0"></div>
 <div class="a" style="left:292px;top:165px;font-size:14px;color:#fff;text-shadow:0 0 1px #000">☝</div>
 <div class="a" style="left:112px;top:222px;width:393px;height:63px;border:1px dashed #ccc"></div>
 <div class="a" style="left:276px;top:242px;width:13px;height:13px;border-radius:50%;background:#e8e8e8;font-size:8px;text-align:center;line-height:13px">+</div>
 <div class="a" style="left:294px;top:242px;width:13px;height:13px;border-radius:50%;background:#e8e8e8;font-size:6px;text-align:center;line-height:13px">■</div>
 <div class="a" style="left:312px;top:242px;width:13px;height:13px;border-radius:50%;background:#e5a8f0;font-size:6px;text-align:center;line-height:13px">✧</div>
 <div class="a" style="left:281px;top:261px;font-size:4.5px;color:#888">Drag widget here</div>
 <div class="a" style="left:105px;top:290px;width:415px;height:5px;background:#bbb"></div>
 <div class="eb"><div class="elogo"></div><div class="a" style="left:37px;top:4px;color:#aaa;font-size:8px;letter-spacing:9px">+⇆⚙▭</div><div class="a" style="left:175px;top:6px;color:#ddd;font-size:5.5px">Pages Template ⌄ &nbsp;⚙</div><div class="a" style="left:265px;top:3px;color:#ccc;font-size:8px;letter-spacing:12px">▭▯▯</div><div class="a" style="left:355px;top:5px;color:#aaa;font-size:7px;letter-spacing:10px">⟡⟡⌕◷◉</div><div class="pub pubp" style="left:442px;width:56px">Publish</div><div class="chev" style="right:20px">⌄</div></div>
 <div class="ep" style="width:105px;left:3px">
  <div class="ph" style="top:7px">Edit Button</div>
  <div class="a" style="left:7px;top:33px;font-size:4.5px">Text Shadow</div><div class="a" style="left:92px;top:32px;font-size:5px">✎</div>
  <div class="a" style="left:7px;top:48px;width:88px;height:11px;background:#2b2e33;border:1px solid #3a3d42"></div><div class="a" style="left:51px;top:49px;width:43px;height:9px;background:#4a4d52;font-size:4.5px;text-align:center;line-height:9px;color:#ddd">Hover</div><div class="a" style="left:22px;top:51px;font-size:4.5px">Normal</div>
  <div class="a" style="left:7px;top:70px;font-size:4.5px">Text Color</div><div class="a" style="left:87px;top:67px;width:9px;height:9px;background:#444"></div>
  <div class="a" style="left:7px;top:87px;font-size:4.5px">Background Type</div>
  <div class="fld" style="left:7px;top:93px;width:88px;height:11px;border-color:#666"></div>
  <div class="a" style="left:7px;top:105px;width:88px;height:80px;background:#26292c;font-size:4.3px;line-height:10px;padding-left:2px;color:#bbb">Grow<br>Shrink<br>Pulse<br>Pulse Grow<br>Pulse Shrink<br>Push<br><span style="display:block;background:#34373b">Pop</span>Bounce In</div>
  <div class="fld" style="left:7px;top:186px;width:88px;height:10px;font-size:4.3px;padding-left:5px">None</div>
  <div class="a" style="left:7px;top:214px;font-size:4.5px">Border Type</div><div class="fld" style="left:44px;top:212px;width:44px;height:10px;font-size:4.3px;padding-left:2px">Default ▾</div>
  <div class="a" style="left:7px;top:228px;font-size:4.5px">Border Radius ▭</div>
  <div class="fld" style="left:7px;top:236px;width:80px"></div>
  <div class="a" style="left:7px;top:268px;font-size:4.5px">Padding ▭</div>
 </div>
 <div class="a" style="left:108px;top:155px;width:5px;height:20px;background:#111"></div>
</div>

<!-- ========== CELL I ========== -->
<div class="c" style="left:1070px;top:600px;width:530px;height:299px">
 <div class="adm"><span>⊕</span><span>⌂ Paw Spa &amp; Wellness</span><span>▪ 0</span><span>+ New</span><span>View Page</span><span style="position:absolute;right:8px">Howdy, Andy ▣</span></div>
 <div class="side" style="width:63px;left:5px">
  <div style="top:9px">⌂ Dashboard</div><div style="top:28px">✎ Posts</div><div style="top:42px">▣ Media</div>
  <div style="left:0;top:57px;width:63px;height:14px;background:#2271b1;color:#fff;padding-left:10px;line-height:14px">▤ Pages</div>
  <div style="top:74px;color:#fff;font-weight:bold;font-size:5px">All Pages</div><div style="top:85px;font-size:5px">Add New Page</div>
  <div style="top:105px">▪ Comments</div><div style="top:119px">✉ Contact</div><div style="top:138px">⊕ Elementor</div><div style="top:152px;color:#72aee6">▤ Templates</div><div style="top:171px">✎ Appearance</div><div style="top:185px">✎ Plugins</div><div style="top:199px">♟ Users</div><div style="top:213px">✎ Tools</div><div style="top:228px">▦ Settings</div><div style="top:242px;color:#8c8f94">● Collapse menu</div>
 </div>
 <div class="a" style="left:0;top:13px;width:5px;height:286px;background:#ddd"></div>
 <div class="a" style="left:68px;top:13px;width:456px;height:26px;border-bottom:1px solid #e0e0e0"></div>
 <div class="a" style="left:76px;top:19px;width:13px;height:13px;background:#2271b1;color:#fff;font-size:9px;text-align:center;line-height:13px">+</div>
 <div class="a" style="left:95px;top:20px;font-size:8px;color:#333;letter-spacing:6px">✎↶↷≡</div>
 <div class="a" style="left:166px;top:18px;width:67px;height:13px;background:#2271b1;color:#dbe9f5;font-size:5.5px;line-height:13px;padding-left:5px">⊕ Edit with Elementor</div>
 <div class="a" style="left:247px;top:19px;width:155px;height:13px;background:#f0f0f0;font-size:5px;line-height:13px;color:#555;padding-left:60px">About Us · Page <span style="margin-left:40px">Ctrl+K</span></div>
 <div class="a" style="left:420px;top:20px;font-size:8px;color:#333;letter-spacing:5px">▭⇱⤢</div>
 <div class="a" style="left:467px;top:19px;width:13px;height:13px;background:#1e1e1e"></div>
 <div class="a" style="left:484px;top:19px;width:20px;height:13px;background:#2271b1"></div>
 <div class="a" style="left:77px;top:63px;font-size:14px;font-weight:bold;color:#111">About Us</div>
 <div class="bl" style="left:77px;top:95px;font-style:italic;white-space:nowrap">Because your dog deserves more than just a bath.</div>
 <div class="bl" style="left:77px;top:113px;width:322px">At <b>Paw Spa Wellness</b>, we believe that every dog is unique, and their care should be too. We're more than a grooming salon—we're a wellness destination for dogs. From luxurious spa treatments to nutritional guidance, fitness support, and overall health care, our mission is to help your furry companion live their happiest, healthiest life.</div>
 <div class="bl" style="left:77px;top:158px;width:322px">Founded by a team of dog lovers with a love for dogs and a passion for holistic care, Paw Spa Wellness was created to meet the growing need for pet care that goes beyond simple grooming. We saw a gap in the pet care world—one where dogs were groomed, but not nurtured as whole beings. So we built a space where pampering meets wellness—wellness is at the heart of everything we do.</div>
 <div class="bl" style="left:77px;top:222px;width:322px">We care for the whole dog—mind, body, and spirit. That means taking the time to understand each dog's personality, needs, and health goals. Whether your pup needs a relaxing bath, support with nutrition, or simply a calming touch, our services are designed to nurture their well-being from the inside out.</div>
 <div class="bl" style="left:77px;top:269px;width:322px">We treat every dog like our own, creating a stress-free, safe, and comforting environment that encourages trust, relaxation, and joy. Every product we use is natural, safe, and free from harsh chemicals. Every interaction is filled with care and intention.</div>
 <div class="a" style="left:63px;top:157px;width:64px;height:88px;background:#2c3338;font-size:4.4px;color:#c3c4c7;line-height:11.7px;padding:3px 6px">Saved Templates<br><span style="color:#72aee6">Popups</span><br>Theme Builder<br>Floating Elements<br>Kit Library<br>Add New<br>Categories</div>
 <div class="a" style="left:64px;top:168px;width:1.5px;height:10px;background:#72aee6"></div>
 <div class="a" style="left:83px;top:175px;font-size:12px;color:#fff;text-shadow:0 0 1px #000">☝</div>
 <div class="a" style="left:406px;top:44px;width:3px;height:90px;background:#ccc"></div>
 <div class="a" style="left:410px;top:40px;width:114px;height:259px;border-left:1px solid #e0e0e0">
  <div class="a" style="left:8px;top:12px;font-size:5.5px">Page</div><div class="a" style="left:32px;top:12px;font-size:5.5px">Block</div><div class="a" style="left:98px;top:11px;font-size:6px">×</div>
  <div class="a" style="left:3px;top:22px;width:25px;height:1.5px;background:#3858e9"></div>
  <div class="a" style="left:8px;top:33px;font-size:5px">▤ About Us</div>
  <div class="a" style="left:8px;top:45px;width:94px;height:49px;background:linear-gradient(180deg,#f3e8d6,#e8c99a)"></div>
  <div class="a" style="left:70px;top:68px;width:18px;height:22px;background:#b58760;opacity:.6;border-radius:40% 40% 0 0"></div>
  <div class="a" style="left:8px;top:97px;font-size:4.3px;color:#9b30d0">✧ Generate with Elementor AI</div>
  <div class="a" style="left:8px;top:110px;width:92px;font-size:4.3px;line-height:7.5px;color:#555;white-space:normal">At Paw Spa Wellness, we go beyond grooming—we nurture your dog's whole well-being. From spa treatments and fitness to holistic health and...</div>
  <div class="a" style="left:8px;top:147px;font-size:4.3px;color:#2271b1">Edit excerpt</div>
  <div class="a" style="left:8px;top:160px;font-size:4.1px;color:#888;line-height:9px">519 words, 3 minutes read time.<br>Last edited a second ago.</div>
  <div class="a" style="left:8px;top:186px;font-size:4.5px;color:#444;line-height:15px">Status<br>Publish<br>Link<br>Author<br>Template</div>
  <div class="a" style="left:52px;top:186px;font-size:4.5px;color:#2271b1;line-height:15px">✓ Published<br>March 24 9:55 am<br>/about-us<br>Andy<br>Default template</div>
 </div>
 <div class="a" style="left:0;top:290px;width:178px;height:9px;background:#1d2327;color:#ddd;font-size:4.2px;line-height:9px;padding-left:3px">paw-spa-wellness.local/wp-admin/edit.php?post_type=elementor_library&amp;ta...</div>
</div>
</body></html>
